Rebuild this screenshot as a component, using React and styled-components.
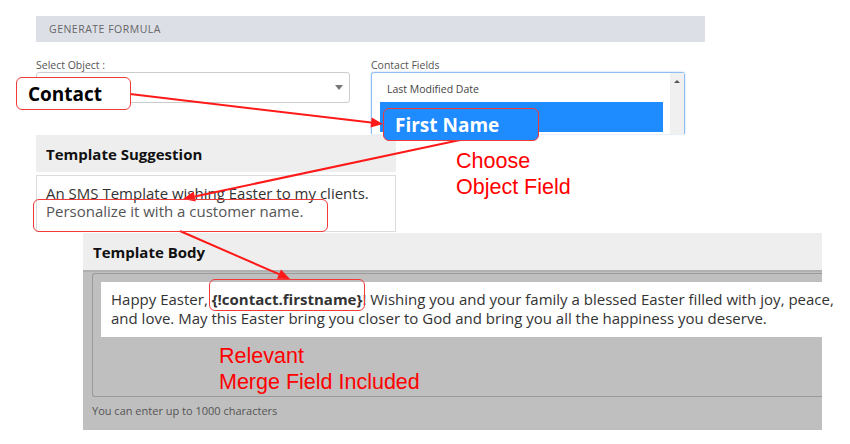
import React from "react";
import styled, { createGlobalStyle } from "styled-components";

const Global = createGlobalStyle`
  html, body { margin: 0; padding: 0; background: #fff; }
  body { font-family: "Open Sans", "Liberation Sans", sans-serif; color: #333; }
`;

const Page = styled.div`
  position: relative;
  width: 850px;
  height: 444px;
  overflow: hidden;
  padding-top: 16px;
  box-sizing: border-box;
`;

const Section = styled.div`
  margin-left: ${(p) => p.$left}px;
  width: ${(p) => p.$width}px;
`;

const FormulaBar = styled.div`
  height: 26px;
  background: #dddfe7;
  display: flex;
  align-items: center;
  padding-left: 13px;
  font-size: 10.5px;
  letter-spacing: 0.5px;
  color: #666;
`;

const FieldRow = styled.div`
  display: flex;
  gap: 21px;
  margin-top: 16px;
`;

const Field = styled.div`
  width: 314px;
  display: flex;
  flex-direction: column;
`;

const Label = styled.div`
  font-size: 10.5px;
  color: #555;
  height: 14px;
  line-height: 14px;
`;

const SelectBox = styled.div`
  height: 29px;
  border: 1px solid #ccc;
  border-radius: 3px;
  display: flex;
  align-items: center;
  justify-content: flex-end;
  padding-right: 6px;
`;

const Caret = styled.span`
  width: 0;
  height: 0;
  border-left: 4px solid transparent;
  border-right: 4px solid transparent;
  border-top: 5px solid #777;
`;

const ListBox = styled.div`
  height: 61px;
  border: 1px solid #8fbff2;
  border-bottom: none;
  border-radius: 3px 3px 0 0;
  display: flex;
  box-shadow: 0 0 2px rgba(80, 150, 240, 0.5);
`;

const ListItems = styled.div`
  flex: 1;
  padding: 4px 7px 0 8px;
`;

const ListItem = styled.div`
  height: 23px;
  display: flex;
  align-items: center;
  padding-left: 7px;
  font-size: 10.5px;
  color: #444;
  background: ${(p) => (p.$selected ? "#1e8bff" : "transparent")};
  ${(p) => p.$selected && "height: 30px; margin-top: 2px;"}
`;

const ScrollBar = styled.div`
  width: 14px;
  background: #f0f0f0;
  display: flex;
  justify-content: center;
  padding-top: 7px;
  box-sizing: border-box;
`;

const UpArrow = styled.span`
  width: 0;
  height: 0;
  border-left: 3px solid transparent;
  border-right: 3px solid transparent;
  border-bottom: 3px solid #555;
`;

const PanelHead = styled.div`
  height: 37px;
  background: #eeeeee;
  display: flex;
  align-items: center;
  padding-left: 10px;
  font-weight: 700;
  font-size: 15px;
  color: #111;
`;

const SuggestionSection = styled(Section)`
  margin-top: 1px;
`;

const SuggestionBody = styled.div`
  margin-top: 3px;
  height: 57px;
  box-sizing: border-box;
  border: 1px solid #dcdcdc;
  padding: 8px 9px;
  font-size: 15px;
  line-height: 18px;
  color: #333;
`;

const Muted = styled.div`
  color: #555;
`;

const BodyPanel = styled(Section)`
  margin-top: 1px;
`;

const GrayArea = styled.div`
  background: #bfbfbf;
  height: 160px;
  border-top: 2px solid #b0b0b0;
  box-sizing: border-box;
  padding: 1px 0 0 9px;
`;

const TextArea = styled.div`
  height: 124px;
  border: 1px solid #9a9a9a;
  border-right: none;
  border-radius: 3px 0 0 3px;
  box-sizing: border-box;
  padding: 8px 0 0 8px;
`;

const WhiteText = styled.div`
  background: #fff;
  height: 55px;
  box-sizing: border-box;
  margin-right: -40px;
  padding: 8px 10px;
  font-size: 15px;
  line-height: 19px;
  color: #333;
  white-space: nowrap;
`;

const Merge = styled.b`
  font-weight: 700;
`;

const Hint = styled.div`
  font-size: 11px;
  color: #555;
  margin-top: 6px;
`;

const Callout = styled.div`
  position: absolute;
  left: ${(p) => p.$x}px;
  top: ${(p) => p.$y}px;
  width: ${(p) => p.$w}px;
  height: ${(p) => p.$h}px;
  box-sizing: border-box;
  border: 1.5px solid #f03a3a;
  border-radius: 6px;
  background: ${(p) => p.$bg || "transparent"};
  color: ${(p) => p.$color || "#000"};
  font-weight: 700;
  font-size: ${(p) => p.$fs || 20}px;
  display: flex;
  align-items: center;
  padding-left: ${(p) => p.$pl || 11}px;
`;

const Note = styled.div`
  position: absolute;
  left: ${(p) => p.$x}px;
  top: ${(p) => p.$y}px;
  font-family: "Liberation Sans", Arial, sans-serif;
  font-size: 21.5px;
  line-height: 26px;
  color: #ff0000;
`;

const Arrows = styled.svg`
  position: absolute;
  left: 0;
  top: 0;
  pointer-events: none;
`;

function Arrow({ x1, y1, x2, y2 }) {
  const a = Math.atan2(y2 - y1, x2 - x1);
  const L = 12, W = 5;
  const bx = x2 - L * Math.cos(a), by = y2 - L * Math.sin(a);
  const p1 = `${bx + W * Math.sin(a)},${by - W * Math.cos(a)}`;
  const p2 = `${bx - W * Math.sin(a)},${by + W * Math.cos(a)}`;
  return (
    <g>
      <line x1={x1} y1={y1} x2={bx} y2={by} stroke="#ff1a1a" strokeWidth="2" />
      <polygon points={`${x2},${y2} ${p1} ${p2}`} fill="#ff1a1a" />
    </g>
  );
}

export default function App() {
  return (
    <>
      <Global />
      <Page>
        <Section $left={36} $width={669}>
          <FormulaBar>GENERATE FORMULA</FormulaBar>
          <FieldRow>
            <Field>
              <Label>Select Object :</Label>
              <SelectBox>
                <Caret />
              </SelectBox>
            </Field>
            <Field>
              <Label>Contact Fields</Label>
              <ListBox>
                <ListItems>
                  <ListItem>Last Modified Date</ListItem>
                  <ListItem $selected />
                </ListItems>
                <ScrollBar>
                  <UpArrow />
                </ScrollBar>
              </ListBox>
            </Field>
          </FieldRow>
        </Section>

        <SuggestionSection $left={36} $width={360}>
          <PanelHead>Template Suggestion</PanelHead>
          <SuggestionBody>
            <div>An SMS Template wishing Easter to my clients.</div>
            <Muted>Personalize it with a customer name.</Muted>
          </SuggestionBody>
        </SuggestionSection>

        <BodyPanel $left={83} $width={739}>
          <PanelHead>Template Body</PanelHead>
          <GrayArea>
            <TextArea>
              <WhiteText>
                Happy Easter, <Merge>{"{!contact.firstname}"}</Merge>! Wishing you and your family a blessed Easter filled with joy, peace,
                <br />
                and love. May this Easter bring you closer to God and bring you all the happiness you deserve.
              </WhiteText>
            </TextArea>
            <Hint>You can enter up to 1000 characters</Hint>
          </GrayArea>
        </BodyPanel>

        <Arrows width="850" height="444" viewBox="0 0 850 444">
          <Arrow x1={130} y1={94} x2={383} y2={124} />
          <Arrow x1={460} y1={140} x2={183} y2={199} />
          <Arrow x1={180} y1={231} x2={290} y2={279} />
        </Arrows>

        <Callout $x={16} $y={77} $w={115} $h={33} $bg="#fff" $fs={19}>Contact</Callout>
        <Callout $x={383} $y={108} $w={156} $h={33} $bg="#1e8bff" $color="#fff" $fs={19}>First Name</Callout>
        <Callout $x={33} $y={199} $w={295} $h={33} />
        <Callout $x={209} $y={279} $w={156} $h={32} />

        <Note $x={456} $y={148}>Choose<br />Object Field</Note>
        <Note $x={219} $y={343}>Relevant<br />Merge Field Included</Note>
      </Page>
    </>
  );
}
